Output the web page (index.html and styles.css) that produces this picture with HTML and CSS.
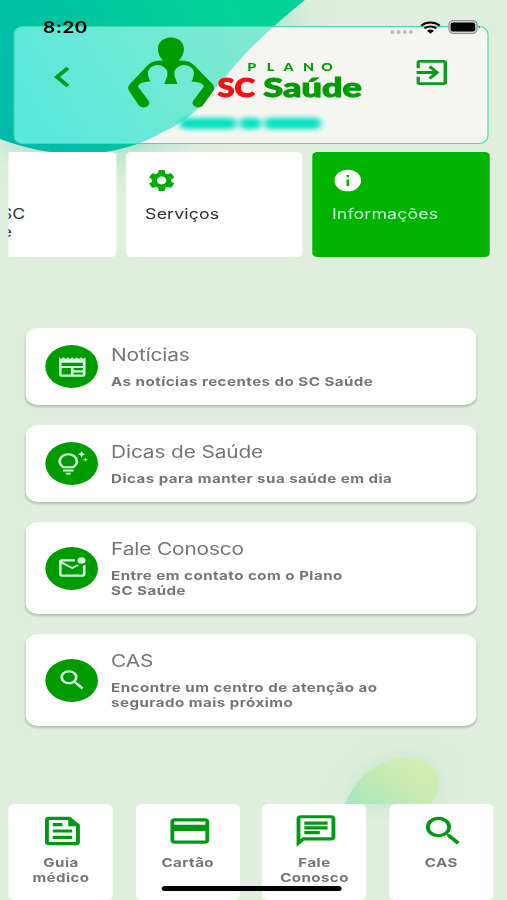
FILE: index.html
```html
<!DOCTYPE html>
<html lang="pt-BR">
<head>
<meta charset="UTF-8">
<meta name="viewport" content="width=device-width, initial-scale=1.0">
<title>SC Saúde</title>
<link rel="stylesheet" href="styles.css">
</head>
<body>

<div class="screen">

<svg class="backdrop" viewBox="0 0 507 900" preserveAspectRatio="none">
  <defs>
    <linearGradient id="teal" gradientUnits="userSpaceOnUse" x1="20" y1="130" x2="230" y2="0">
      <stop offset="0" stop-color="#00bbaa"/>
      <stop offset="1" stop-color="#02d395"/>
    </linearGradient>
    <linearGradient id="tealLight" gradientUnits="userSpaceOnUse" x1="50" y1="130" x2="230" y2="20">
      <stop offset="0" stop-color="#5be8da"/>
      <stop offset="1" stop-color="#7de9d0"/>
    </linearGradient>
    <linearGradient id="leaf" x1="0" y1="1" x2="1" y2="0.3">
      <stop offset="0" stop-color="#a5e6bd"/>
      <stop offset="0.6" stop-color="#c8ebb2"/>
      <stop offset="1" stop-color="#d2edb0"/>
    </linearGradient>
    <filter id="glow" x="-30%" y="-30%" width="160%" height="160%"><feGaussianBlur stdDeviation="14"/></filter>
    <path id="blob" d="M0 0H305Q270 28 245 54L198 108Q185 122 163 132C140 145 115 153 82 154C50 154 25 148 0 139Z"/>
    <clipPath id="panel"><rect x="14" y="27" width="475" height="116" rx="8" ry="7"/></clipPath>
  </defs>
  <rect width="507" height="900" fill="#e0eedd"/>
  <use href="#blob" fill="#7fdcc0" opacity="0.6" transform="translate(6 10)" filter="url(#glow)"/>
  <use href="#blob" fill="url(#teal)"/>
  <g clip-path="url(#panel)">
    <rect width="507" height="160" fill="#f5f6f2"/>
    <use href="#blob" fill="url(#tealLight)"/>
  </g>
  <path d="M345 806C355 778 378 758 405 758C430 758 440 772 439 785Q438 797 428 806Z" fill="#9fdcc0" opacity="0.45" filter="url(#glow)"/>
  <path d="M345 804C355 778 378 758 405 758C430 758 440 772 439 785Q438 797 430 804Z" fill="url(#leaf)"/>
</svg>

<div class="status">
  <span class="time">8:20</span>
  <span class="signal"><i></i><i></i><i></i><i></i></span>
  <svg class="wifi" viewBox="0 0 17 13">
    <path d="M1 4.6A10.6 10.6 0 0 1 16 4.6M3.6 7.4A7 7 0 0 1 13.4 7.4" fill="none" stroke="#000" stroke-width="2"/>
    <path d="M5.6 9.8A4.2 4.2 0 0 1 11.4 9.8L8.5 12.8Z"/>
  </svg>
  <svg class="battery" viewBox="0 0 27 14">
    <rect x="0.5" y="0.5" width="23" height="13" rx="4" fill="#d3d3d0" stroke="#8f8f8c"/>
    <rect x="2" y="2.4" width="20" height="9.2" rx="2"/>
    <path d="M25 5Q26.6 7 25 9Z" fill="#555"/>
  </svg>
</div>

<header class="top">
  <svg class="back" viewBox="0 0 13 22"><path d="M11.5 2L2.500 11L11.5 20"/></svg>
  <div class="brand">
    <svg class="logo" viewBox="124 34 244 76" preserveAspectRatio="none">
      <g fill="#009c00">
        <path d="M170 37.500C178 37.500 183 42.500 183 49C183 54.500 180 58.500 177.500 60.600Q188 60.300 193 65L212 84.500Q214.500 88 212 91.500L202 105.500Q198.500 109 194 106.500Q190 104 192.500 100.500L203 86.500Q202 82 190.500 81.500Q193.500 76 193 71.500Q190.500 65 183 65Q176 65.500 173.500 71.500Q173 76 175 79.500L176.500 84H163.500L165 79.500Q167 76 166.500 71.500Q164 65.500 157 65Q149.500 65 147 71.500Q146.500 76 149.500 81.500Q138 82 137 86.500L147.500 100.500Q150 104 146 106.500Q141.500 109 138 105.500L128.500 91.500Q126 88 128.500 84.500L147 65Q152 60.300 162.500 60.600C160 58.500 157 54.500 157 49C157 42.500 162 37.500 170 37.500Z"/>
        <text class="plano" transform="scale(1.3 1)" x="189.500 204.500 217.500 232.500 246.500" y="71.300">PLANO</text>
        <text class="word" x="262.500" y="97" textLength="98.500" lengthAdjust="spacingAndGlyphs" stroke="#009c00">Saúde</text>
      </g>
      <text class="word" x="216.500" y="97" textLength="37.500" lengthAdjust="spacingAndGlyphs" fill="#ff0a14" stroke="#ff0a14">SC</text>
    </svg>
    <div class="hidden-name"><i></i><i></i><i></i></div>
  </div>
  <svg class="exit" viewBox="3 3 18 18"><path d="M10.090 15.590L11.500 17l5-5-5-5-1.410 1.410L12.670 11H3v2h9.670l-2.580 2.590zM19 3H5a2 2 0 0 0-2 2v4h2V5h14v14H5v-4H3v4a2 2 0 0 0 2 2h14a2 2 0 0 0 2-2V5a2 2 0 0 0-2-2z"/></svg>
</header>

<nav class="tabs">
  <div class="tab">
    <svg viewBox="0 0 24 24"></svg>
    <span>Meu SC<br>Saúde</span>
  </div>
  <div class="tab">
    <svg viewBox="0 0 24 24"><path d="M19.140 12.940c.04-.3.06-.61.06-.94 0-.32-.02-.64-.07-.94l2.030-1.580a.49.49 0 0 0 .12-.61l-1.920-3.320a.49.49 0 0 0-.59-.22l-2.390.96c-.5-.38-1.030-.7-1.620-.94l-.36-2.540a.48.48 0 0 0-.48-.41h-3.840a.47.47 0 0 0-.47.41l-.36 2.540c-.59.24-1.130.57-1.620.94l-2.390-.96a.48.48 0 0 0-.59.22L2.740 8.870a.47.47 0 0 0 .12.61l2.030 1.580c-.05.3-.09.63-.09.94s.02.64.07.94l-2.030 1.580a.49.49 0 0 0-.12.61l1.920 3.320c.12.22.37.29.59.22l2.390-.96c.5.38 1.030.7 1.620.94l.36 2.540c.05.24.24.41.48.41h3.840c.24 0 .44-.17.47-.41l.36-2.540c.59-.24 1.130-.56 1.620-.94l2.390.96c.22.08.47 0 .59-.22l1.920-3.320a.47.47 0 0 0-.12-.61l-2.010-1.580zM12 15.600A3.600 3.600 0 1 1 12 8.400a3.600 3.600 0 0 1 0 7.200z"/></svg>
    <span>Serviços</span>
  </div>
  <div class="tab active">
    <svg viewBox="0 0 24 24"><path d="M12 2a10 10 0 1 0 0 20 10 10 0 0 0 0-20zm1 15h-2v-6h2v6zm0-8h-2V7h2v2z"/></svg>
    <span>Informações</span>
  </div>
</nav>

<main class="list">
  <div class="card">
    <div class="badge">
      <svg viewBox="0 0 24 24"><path d="M22 3l-1.670 1.670L18.670 3 17 4.670 15.330 3l-1.660 1.670L12 3l-1.670 1.670L8.670 3 7 4.670 5.330 3 3.670 4.670 2 3v16a2 2 0 0 0 2 2h16a2 2 0 0 0 2-2V3zM11 19H4v-6h7v6zm9 0h-7v-2h7v2zm0-4h-7v-2h7v2zm0-4H4V8h16v3z"/></svg>
    </div>
    <div class="info">
      <h2>Notícias</h2>
      <p>As notícias recentes do SC Saúde</p>
    </div>
  </div>
  <div class="card">
    <div class="badge">
      <svg viewBox="0 0 24 24"><path d="M7 20h4a2 2 0 0 1-4 0zm-2-1h8v-2H5v2zm11.500-9.500c0 3.820-2.660 5.860-3.770 6.500H5.270c-1.110-.64-3.770-2.680-3.770-6.500a7.500 7.500 0 0 1 15 0zm-2 0a5.500 5.500 0 0 0-11 0c0 2.490 1.510 3.890 2.350 4.500h6.300c.84-.61 2.350-2.010 2.350-4.500zm6.870-2.130L20 8l1.370.63L22 10l.63-1.370L24 8l-1.370-.63L22 6l-.63 1.370zM19 6l.94-2.060L22 3l-2.060-.94L19 0l-.94 2.060L16 3l2.060.94L19 6z"/></svg>
    </div>
    <div class="info">
      <h2>Dicas de Saúde</h2>
      <p>Dicas para manter sua saúde em dia</p>
    </div>
  </div>
  <div class="card tall">
    <div class="badge">
      <svg viewBox="0 0 24 24"><path d="M22 8.980V18a2 2 0 0 1-2 2H4a2 2 0 0 1-2-2V6c0-1.100.9-2 2-2h10.100a5 5 0 0 0 0 2H4l8 5 3.670-2.290c.47.43 1.020.76 1.630.98L12 13 4 8v10h16V9.900c.74-.15 1.420-.48 2-.92z"/><circle cx="19" cy="5" r="3"/></svg>
    </div>
    <div class="info">
      <h2>Fale Conosco</h2>
      <p>Entre em contato com o Plano<br>SC Saúde</p>
    </div>
  </div>
  <div class="card tall">
    <div class="badge">
      <svg viewBox="0 0 24 24"><path d="M15.500 14h-.79l-.28-.27A6.470 6.470 0 0 0 16 9.500 6.500 6.500 0 1 0 9.500 16c1.610 0 3.090-.59 4.230-1.570l.27.28v.79l5 4.990L20.490 19l-4.990-5zm-6 0a4.500 4.500 0 1 1 0-9 4.500 4.500 0 0 1 0 9z"/></svg>
    </div>
    <div class="info">
      <h2>CAS</h2>
      <p>Encontre um centro de atenção ao<br>segurado mais próximo</p>
    </div>
  </div>
</main>

<footer class="shortcuts">
  <div class="shortcut">
    <svg viewBox="0 0 24 24"><path d="M16 3H5a2 2 0 0 0-2 2v14a2 2 0 0 0 2 2h14a2 2 0 0 0 2-2V8l-5-5zm3 16H5V5h10v4h4v10zM7 17h10v-2H7v2zm5-10H7v2h5V7zm-5 6h10v-2H7v2z"/></svg>
    <span>Guia<br>médico</span>
  </div>
  <div class="shortcut">
    <svg viewBox="0 0 24 24"><path d="M20 4H4c-1.110 0-2 .89-2 2v12c0 1.110.89 2 2 2h16c1.110 0 2-.89 2-2V6c0-1.110-.89-2-2-2zm0 14H4v-6h16v6zm0-10H4V6h16v2z"/></svg>
    <span>Cartão</span>
  </div>
  <div class="shortcut">
    <svg viewBox="0 0 24 24"><path d="M4 4h16v12H5.170L4 17.170V4m0-2c-1.100 0-2 .9-2 2v18l4-4h14c1.100 0 2-.9 2-2V4c0-1.100-.9-2-2-2H4zm2 10h8v2H6v-2zm0-3h12v2H6V9zm0-3h12v2H6V6z"/></svg>
    <span>Fale<br>Conosco</span>
  </div>
  <div class="shortcut">
    <svg viewBox="0 0 24 24"><path d="M15.500 14h-.79l-.28-.27A6.470 6.470 0 0 0 16 9.500 6.500 6.500 0 1 0 9.500 16c1.610 0 3.090-.59 4.230-1.570l.27.28v.79l5 4.990L20.490 19l-4.990-5zm-6 0a4.500 4.500 0 1 1 0-9 4.500 4.500 0 0 1 0 9z"/></svg>
    <span>CAS</span>
  </div>
</footer>

<div class="home-bar"></div>

</div>

</body>
</html>
```
FILE: styles.css
```css
* {
    box-sizing: border-box;
}

body {
    margin: 0;
    overflow: hidden;
    background: #e0eedd;
    font-family: Inter, Roboto, sans-serif;
}

.screen {
    position: relative;
    width: 414px;
    height: 900px;
    overflow: hidden;
    display: flex;
    flex-direction: column;
    transform: scaleX(1.22464);
    transform-origin: 0 0;
}

.backdrop {
    position: absolute;
    inset: 0;
    width: 100%;
    height: 100%;
    z-index: -1;
}

/* status bar lies over the header panel */
.status {
    position: absolute;
    top: 17px;
    left: 35px;
    right: 21px;
    height: 20px;
    display: flex;
    align-items: center;
}

.time {
    font-size: 16px;
    font-weight: 600;
    letter-spacing: 0.2px;
    margin-right: auto;
}

.signal {
    display: flex;
    gap: 2px;
    margin: 9px 6px 0 0;
}

.signal i {
    width: 3px;
    height: 4px;
    border-radius: 2px;
    background: #bcbcb8;
}

.wifi {
    width: 17px;
    height: 13px;
    margin-right: 6px;
}

.battery {
    width: 27px;
    height: 14px;
}

.top {
    flex: none;
    display: flex;
    align-items: flex-start;
    height: 118px;
    margin: 26px 14.700px 0 11px;
    padding-left: 32px;
    border: 1.500px solid #3fdcae;
    border-radius: 8px;
}

.back {
    width: 13px;
    height: 22px;
    margin-top: 39px;
    fill: none;
    stroke: #089c1c;
    stroke-width: 3.500;
}

.brand {
    margin: 7px 0 0 44.500px;
}

.logo {
    display: block;
    width: 199.200px;
    height: 76px;
}

.plano {
    font: 900 11px Lato, sans-serif;
}

.word {
    font: 900 26.500px Lato, sans-serif;
    stroke-width: 1;
}

/* member name, kept unreadable */
.hidden-name {
    display: flex;
    gap: 3px;
    margin: 8px 0 0 45px;
    filter: blur(2.500px);
}

.hidden-name i {
    width: 46px;
    height: 11px;
    border-radius: 4px;
    background: #00e2c2;
}

.hidden-name i:nth-child(2) {
    width: 17px;
}

.exit {
    width: 25px;
    height: 25px;
    margin: 33px 0 0 39px;
    fill: #089c1c;
}

.tabs {
    flex: none;
    display: flex;
    justify-content: flex-end;
    gap: 8px;
    height: 104.500px;
    margin: 8px 14.500px 0 6.500px;
    overflow: hidden;
}

.tab {
    flex: 0 0 144.500px;
    padding: 15px 16px;
    border-radius: 4px;
    background: #fff;
    color: #2e2e2e;
    font-size: 14.500px;
    line-height: 18px;
}

.tab svg {
    display: block;
    width: 26px;
    height: 27px;
    margin-bottom: 10.500px;
    fill: #00ab08;
}

.tab span {
    letter-spacing: 0.1px;
}

.tab.active {
    background: #00b400;
    color: #c4f5d8;
}

.tab.active svg {
    fill: #fff;
}

.list {
    display: flex;
    flex-direction: column;
    gap: 20px;
    margin: 71.500px 25.500px 0 21.200px;
}

.card {
    display: flex;
    align-items: center;
    height: 77px;
    padding-left: 16px;
    border-radius: 10px;
    background: #fff;
    box-shadow: 0 2px 2px rgba(0, 0, 0, 0.2);
}

.card.tall {
    height: 92px;
}

.badge {
    display: flex;
    align-items: center;
    justify-content: center;
    width: 43px;
    height: 43px;
    margin-right: 10.500px;
    border-radius: 50%;
    background: #009c00;
}

.badge svg {
    width: 26px;
    height: 26px;
    fill: #d6fbe4;
}

.info {
    color: #757575;
}

.info h2 {
    margin: 0 0 8px;
    font-size: 17px;
    font-weight: 400;
    line-height: 21px;
    letter-spacing: -0.1px;
}

.info p {
    margin: 0;
    font-size: 12.300px;
    font-weight: 700;
    line-height: 15px;
    letter-spacing: 0.400px;
}

.shortcuts {
    display: flex;
    gap: 18.500px;
    height: 96px;
    margin: auto 0 0 7.300px;
}

.shortcut {
    display: flex;
    flex-direction: column;
    align-items: center;
    width: 85px;
    padding-top: 8px;
    border-radius: 5px;
    background: #fff;
    color: #757575;
    font-size: 12.300px;
    font-weight: 700;
    line-height: 15px;
    letter-spacing: 0.370px;
    text-align: center;
}

.shortcut svg {
    width: 38px;
    height: 38px;
    margin: 0 0 5px 3px;
    fill: #009a12;
}

.home-bar {
    position: absolute;
    left: 131.500px;
    bottom: 9px;
    width: 147px;
    height: 5px;
    border-radius: 3px;
    background: #000;
}
```
